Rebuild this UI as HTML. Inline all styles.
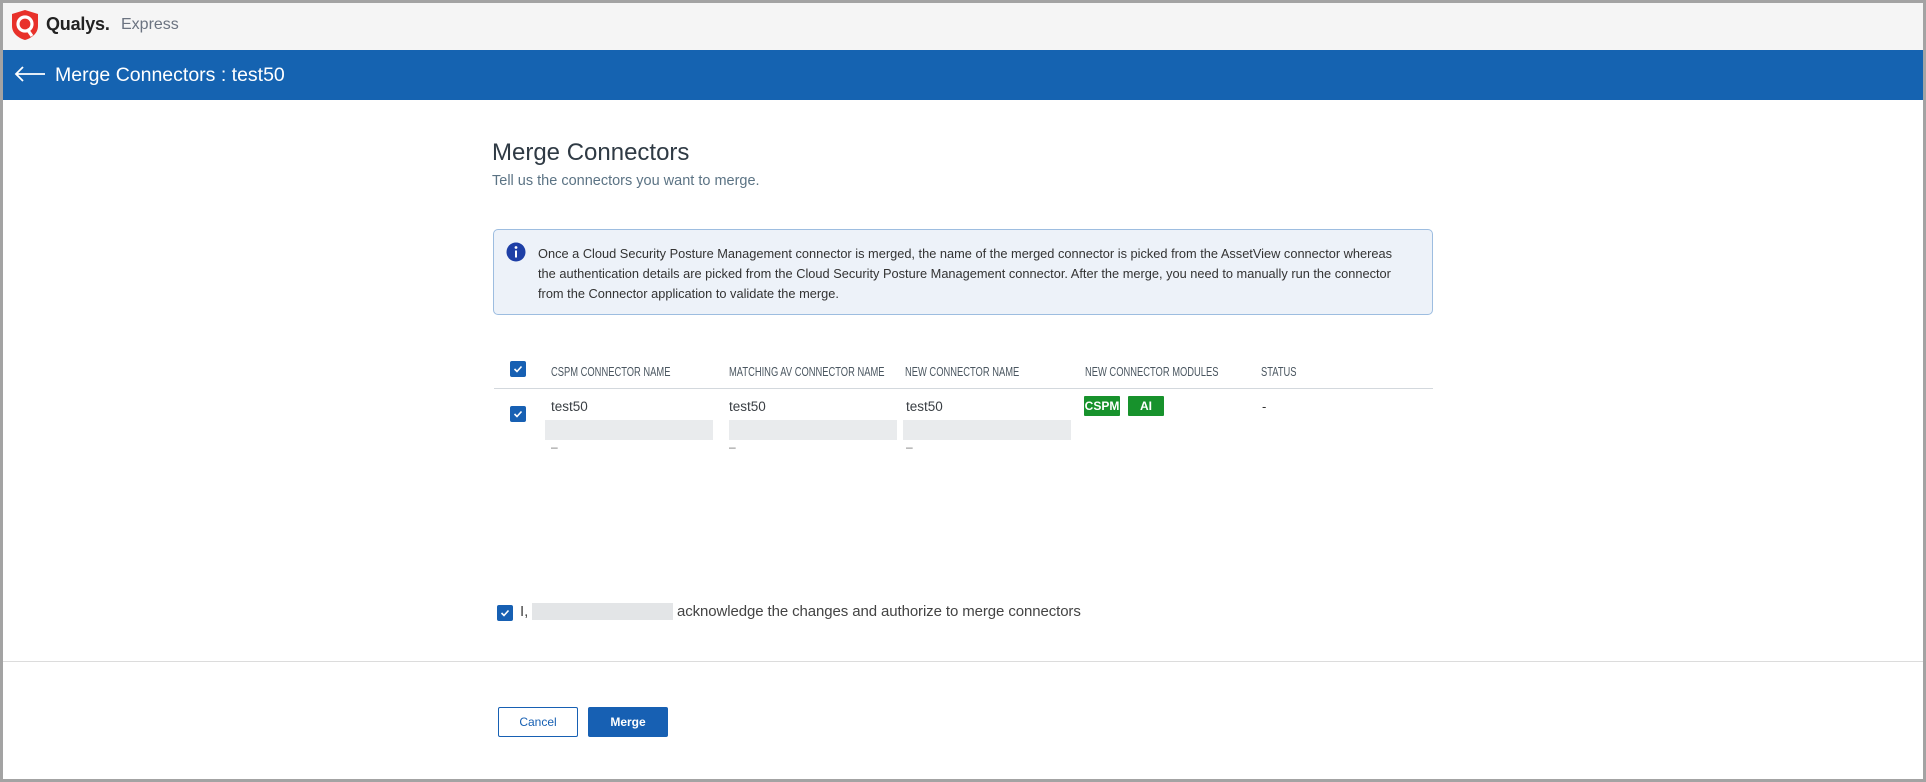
<!DOCTYPE html>
<html><head><meta charset="utf-8"><style>
*{margin:0;padding:0;box-sizing:border-box}
body{width:1926px;height:782px;overflow:hidden;font-family:"Liberation Sans",sans-serif;background:#fff;position:relative}
.frame{position:absolute;left:0;top:0;width:1926px;height:782px;border:3px solid #a3a3a3;border-top-width:3px}
.abs{position:absolute;white-space:nowrap}
.top{position:absolute;left:3px;top:3px;width:1920px;height:47px;background:#f5f5f5}
.blue{position:absolute;left:3px;top:50px;width:1920px;height:50px;background:#1563b1}
.cb{position:absolute;width:16px;height:16px;background:#1760b3;border-radius:2px}
.cb svg{position:absolute;left:3px;top:3px}
.hd{position:absolute;top:364px;font-size:13px;color:#4a5660;transform:scaleX(.72);transform-origin:left;white-space:nowrap}
.cell{position:absolute;top:399px;font-size:13.5px;color:#3a3f44}
.gray{position:absolute;top:420px;height:20px;background:#e9ebed}
.dash{position:absolute;top:440px;font-size:12px;color:#777}
.badge{position:absolute;top:396px;height:20px;background:#17922c;color:#fff;font-size:12px;font-weight:bold;text-align:center;line-height:20px;border-radius:1px}
</style></head><body>
<div class="top"></div>
<svg class="abs" style="left:11px;top:9px" width="28" height="32" viewBox="0 0 28 32"><path d="M14 1 L27 5 L27 17 C27 24 21 29 14 31 C7 29 1 24 1 17 L1 5 Z" fill="#e8312a"/><circle cx="14" cy="15" r="7" fill="none" stroke="#fff" stroke-width="3.2"/><path d="M16 20 L21 27" stroke="#fff" stroke-width="3.2"/></svg>
<div class="abs" style="left:46px;top:14px;font-size:18px;font-weight:bold;color:#222;letter-spacing:-.2px">Qualys.</div>
<div class="abs" style="left:121px;top:16px;font-size:16px;color:#6b7380">Express</div>
<div class="blue"></div>
<svg class="abs" style="left:14px;top:66px" width="32" height="16" viewBox="0 0 32 16"><path d="M31 8 H2 M9 1 L2 8 L9 15" fill="none" stroke="#fff" stroke-width="1.8"/></svg>
<div class="abs" style="left:55px;top:64px;font-size:19.5px;color:#fff">Merge Connectors : test50</div>

<div class="abs" style="left:492px;top:139px;font-size:24px;color:#2f3a44">Merge Connectors</div>
<div class="abs" style="left:492px;top:173px;font-size:14.5px;color:#5b7384">Tell us the connectors you want to merge.</div>

<div class="abs" style="left:493px;top:229px;width:940px;height:86px;background:#edf2f9;border:1px solid #9dbde0;border-radius:5px"></div>
<svg class="abs" style="left:506px;top:242px" width="20" height="20" viewBox="0 0 20 20"><circle cx="10" cy="10" r="9.5" fill="#1e3fa6"/><circle cx="10" cy="5.5" r="1.4" fill="#fff"/><rect x="9" y="8.5" width="2" height="7" fill="#fff"/></svg>
<div class="abs" style="left:538px;top:244px;font-size:12.8px;color:#333;line-height:20px">Once a Cloud Security Posture Management connector is merged, the name of the merged connector is picked from the AssetView connector whereas<br>the authentication details are picked from the Cloud Security Posture Management connector. After the merge, you need to manually run the connector<br>from the Connector application to validate the merge.</div>

<div class="cb" style="left:510px;top:361px"><svg width="10" height="10" viewBox="0 0 10 10"><path d="M1.5 5 L4 7.5 L8.5 2.5" fill="none" stroke="#fff" stroke-width="1.6"/></svg></div>
<div class="hd" style="left:551px">CSPM CONNECTOR NAME</div>
<div class="hd" style="left:729px">MATCHING AV CONNECTOR NAME</div>
<div class="hd" style="left:905px">NEW CONNECTOR NAME</div>
<div class="hd" style="left:1085px">NEW CONNECTOR MODULES</div>
<div class="hd" style="left:1261px">STATUS</div>
<div class="abs" style="left:494px;top:388px;width:939px;height:1px;background:#d3d8dd"></div>

<div class="cb" style="left:510px;top:406px"><svg width="10" height="10" viewBox="0 0 10 10"><path d="M1.5 5 L4 7.5 L8.5 2.5" fill="none" stroke="#fff" stroke-width="1.6"/></svg></div>
<div class="cell" style="left:551px">test50</div>
<div class="cell" style="left:729px">test50</div>
<div class="cell" style="left:906px">test50</div>
<div class="gray" style="left:545px;width:168px"></div>
<div class="gray" style="left:729px;width:168px"></div>
<div class="gray" style="left:903px;width:168px"></div>
<div class="dash" style="left:551px">–</div>
<div class="dash" style="left:729px">–</div>
<div class="dash" style="left:906px">–</div>
<div class="badge" style="left:1084px;width:36px">CSPM</div>
<div class="badge" style="left:1128px;width:36px">AI</div>
<div class="abs" style="left:1262px;top:399px;font-size:13px;color:#333">-</div>

<div class="cb" style="left:497px;top:605px"><svg width="10" height="10" viewBox="0 0 10 10"><path d="M1.5 5 L4 7.5 L8.5 2.5" fill="none" stroke="#fff" stroke-width="1.6"/></svg></div>
<div class="abs" style="left:520px;top:603px;font-size:15px;color:#444">I,</div>
<div class="abs" style="left:532px;top:603px;width:141px;height:17px;background:#e3e5e7"></div>
<div class="abs" style="left:677px;top:603px;font-size:15px;color:#444;letter-spacing:-.1px">acknowledge the changes and authorize to merge connectors</div>

<div class="abs" style="left:3px;top:661px;width:1920px;height:1px;background:#dcdcdc"></div>
<div class="abs" style="left:498px;top:707px;width:80px;height:30px;border:1px solid #1760b3;border-radius:2px;color:#1760b3;font-size:12px;text-align:center;line-height:28px">Cancel</div>
<div class="abs" style="left:588px;top:707px;width:80px;height:30px;background:#1760b3;border-radius:2px;color:#fff;font-size:12px;font-weight:bold;text-align:center;line-height:30px">Merge</div>
<div class="frame"></div>
</body></html>
